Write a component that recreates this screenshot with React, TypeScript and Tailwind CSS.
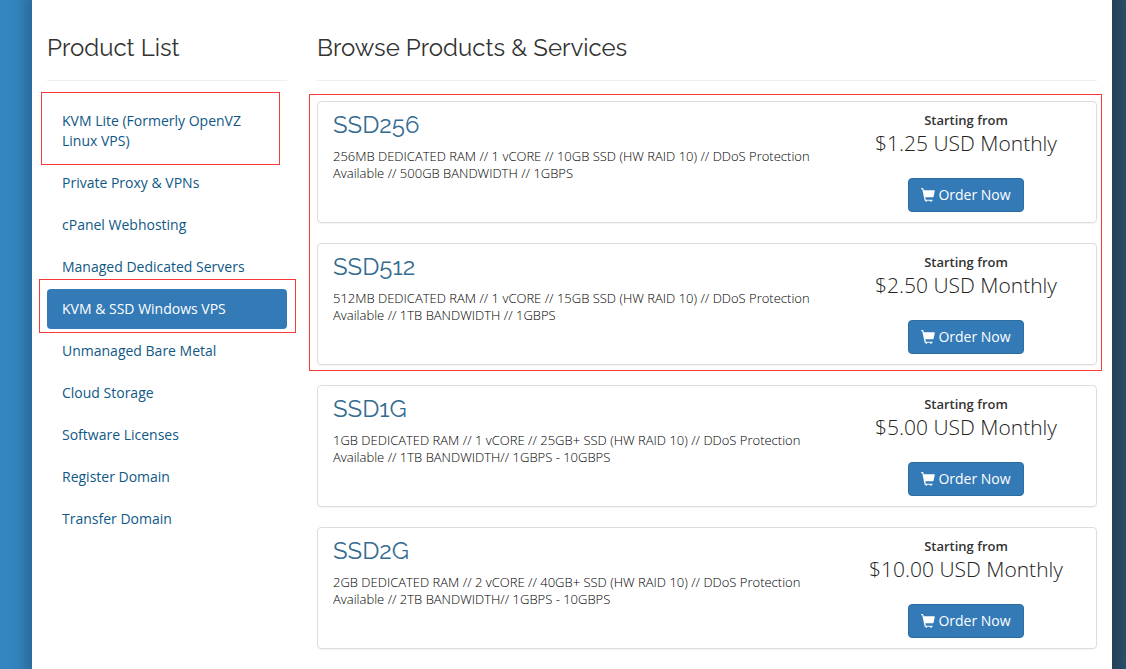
type Category = { name: string; active?: boolean; mark?: string };
type Product = { name: string; lines: [string, string]; price: string };

const categories: Category[] = [
  { name: 'KVM Lite (Formerly OpenVZ Linux VPS)', mark: '-top-[9px] -left-[6px] right-[7px] -bottom-[4px]' },
  { name: 'Private Proxy & VPNs' },
  { name: 'cPanel Webhosting' },
  { name: 'Managed Dedicated Servers' },
  { name: 'KVM & SSD Windows VPS', active: true, mark: '-top-[10px] -left-[8px] -right-[9px] -bottom-[4px]' },
  { name: 'Unmanaged Bare Metal' },
  { name: 'Cloud Storage' },
  { name: 'Software Licenses' },
  { name: 'Register Domain' },
  { name: 'Transfer Domain' },
];

const featured: Product[] = [
  {
    name: 'SSD256',
    lines: ['256MB DEDICATED RAM // 1 vCORE // 10GB SSD (HW RAID 10) // DDoS Protection', 'Available // 500GB BANDWIDTH // 1GBPS'],
    price: '$1.25 USD Monthly',
  },
  {
    name: 'SSD512',
    lines: ['512MB DEDICATED RAM // 1 vCORE // 15GB SSD (HW RAID 10) // DDoS Protection', 'Available // 1TB BANDWIDTH // 1GBPS'],
    price: '$2.50 USD Monthly',
  },
];

const others: Product[] = [
  {
    name: 'SSD1G',
    lines: ['1GB DEDICATED RAM // 1 vCORE // 25GB+ SSD (HW RAID 10) // DDoS Protection', 'Available // 1TB BANDWIDTH// 1GBPS - 10GBPS'],
    price: '$5.00 USD Monthly',
  },
  {
    name: 'SSD2G',
    lines: ['2GB DEDICATED RAM // 2 vCORE // 40GB+ SSD (HW RAID 10) // DDoS Protection', 'Available // 2TB BANDWIDTH// 1GBPS - 10GBPS'],
    price: '$10.00 USD Monthly',
  },
];

function Mark({ inset }: { inset: string }) {
  return <span aria-hidden="true" className={`pointer-events-none absolute z-10 border border-solid border-[#f93838] ${inset}`} />;
}

function CartIcon() {
  return (
    <svg viewBox="0 0 1200 1200" className="size-3.5 shrink-0" fill="currentColor" aria-hidden="true">
      <path
        transform="translate(0 1200) scale(1 -1)"
        d="M56 1200h94q17 0 31 -11t18 -27l38 -162h896q24 0 39 -18.5t10 -42.5l-100 -475q-5 -21 -27 -42.5t-55 -21.5h-633l48 -200h535q21 0 35.5 -15t14.5 -35t-14.5 -35t-35.5 -15h-50v-50q0 -21 -14.5 -35.5t-35.5 -14.5t-35.5 14.5t-14.5 35.5v50h-300v-50q0 -21 -14.5 -35.5t-35.5 -14.5t-35.5 14.5t-14.5 35.5v50h-31q-18 0 -32.5 10t-20.5 19l-5 10l-201 961h-54q-20 0 -35 14.5t-15 35.5t15 35.5t35 14.5z"
      />
    </svg>
  );
}

function SectionTitle({ children }: { children: string }) {
  return (
    <h2 className="mb-5 border-b border-[#eee] pt-8 pb-4 font-[Raleway,Lato,sans-serif] text-2xl leading-8 font-normal text-[#333]">
      {children}
    </h2>
  );
}

function ProductCard({ product }: { product: Product }) {
  return (
    <article className="flex min-h-[122px] gap-4 rounded border border-[#ddd] px-[15px] pb-2.5 shadow-[0_1px_1px_rgba(0,0,0,0.05)]">
      <div className="min-w-0 flex-1 pt-[7px]">
        <h3 className="font-[Raleway,Lato,sans-serif] text-2xl leading-8 text-[#336b91]">{product.name}</h3>
        <p className="mt-[7px] text-[13px] leading-[17px] font-light text-black">
          {product.lines[0]}
          <br />
          {product.lines[1]}
        </p>
      </div>
      <div className="flex w-[230px] shrink-0 flex-col items-center pt-[9px]">
        <span className="text-[13px] leading-[18px] font-semibold text-[#333]">Starting from</span>
        <span className="text-[21px] leading-7 font-light text-[#222]">{product.price}</span>
        <button
          type="button"
          className="mt-[21px] flex h-[34px] items-center gap-[3px] rounded border border-[#2e6da4] bg-[#337ab7] px-3 text-sm text-white"
        >
          <CartIcon />
          Order Now
        </button>
      </div>
    </article>
  );
}

export default function App() {
  return (
    <div className="min-h-screen overflow-hidden bg-linear-to-r from-[#3385c0] from-5% to-[#2c506e] to-95% pr-3.5 pl-8 font-['Open_Sans',sans-serif]">
      <div className="flex min-h-screen gap-[30px] bg-white px-[15px] pb-5 shadow-[0_0_12px_8px_rgba(0,0,0,0.2)]">
        <aside className="w-60 shrink-0">
          <SectionTitle>Product List</SectionTitle>
          <nav>
            <ul className="flex flex-col gap-0.5">
              {categories.map((c) => (
                <li key={c.name} className="relative">
                  <a
                    href="#"
                    aria-current={c.active ? 'page' : undefined}
                    className={`block rounded px-[15px] py-2.5 text-sm leading-5 ${
                      c.active ? 'bg-[#337ab7] font-medium text-white' : 'text-[#0f5886]'
                    }`}
                  >
                    {c.name}
                  </a>
                  {c.mark && <Mark inset={c.mark} />}
                </li>
              ))}
            </ul>
          </nav>
        </aside>
        <main className="min-w-0 flex-1">
          <SectionTitle>Browse Products &amp; Services</SectionTitle>
          <div className="flex flex-col gap-5">
            <div className="relative flex flex-col gap-5">
              {featured.map((p) => (
                <ProductCard key={p.name} product={p} />
              ))}
              <Mark inset="-top-[7px] -left-[8px] -right-[5px] -bottom-[6px]" />
            </div>
            {others.map((p) => (
              <ProductCard key={p.name} product={p} />
            ))}
          </div>
        </main>
      </div>
    </div>
  );
}
